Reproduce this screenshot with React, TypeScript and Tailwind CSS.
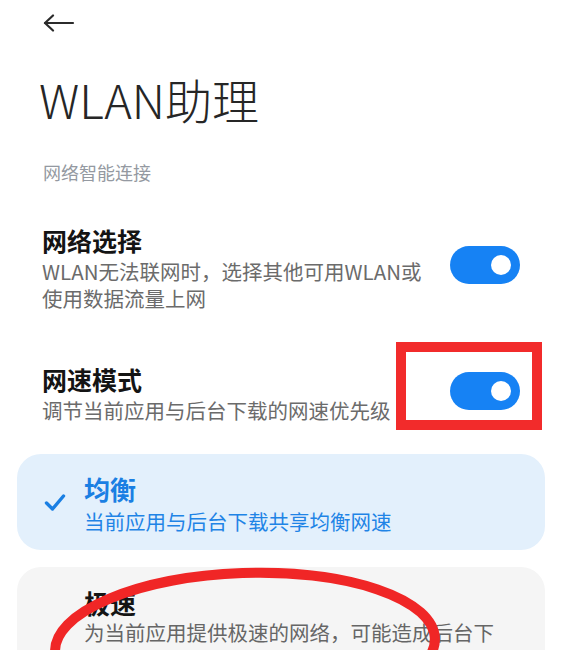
import React from "react";

function Toggle() {
  return (
    <div className="flex h-[38px] w-[70px] shrink-0 items-center justify-end rounded-full bg-[#1682f4] pr-[9px] mb-[6px]">
      <div className="h-[20px] w-[20px] rounded-full bg-white" />
    </div>
  );
}

export default function App() {
  return (
    <div className="relative h-[650px] w-[562px] overflow-hidden bg-white font-['Noto_Sans_CJK_SC','Noto_Sans',sans-serif]">
      {/* header */}
      <div className="flex h-[46px] items-center pl-[43px]">
        <svg width="32" height="18" viewBox="0 0 32 18" fill="none" stroke="#2b2b2b" strokeWidth="2.2" strokeLinecap="round" strokeLinejoin="round">
          <path d="M2 9 H30" />
          <path d="M10 1.5 L2 9 L10 16.5" />
        </svg>
      </div>

      {/* title */}
      <div className="mt-[30px] pl-[39px] text-[47px] font-extralight leading-[46px] text-[#262626]">
        WLAN助理
      </div>

      {/* section label */}
      <div className="mt-[38px] pl-[43px] text-[18px] leading-[24px] text-[#9499a1]">
        网络智能连接
      </div>

      {/* row 1 */}
      <div className="mt-[40px] flex items-center gap-[12px] pl-[42px] pr-[42px]">
        <div className="flex-1">
          <div className="text-[25px] font-bold leading-[32px] text-[#141414]">网络选择</div>
          <div className="mt-[2px] text-[20.5px] leading-[27px] text-[#6b6b6b]">
            WLAN无法联网时，选择其他可用WLAN或
            <br />
            使用数据流量上网
          </div>
        </div>
        <Toggle />
      </div>

      {/* row 2 */}
      <div className="mt-[51px] flex items-center gap-[12px] pl-[42px] pr-[42px]">
        <div className="flex-1">
          <div className="text-[25px] font-bold leading-[32px] text-[#141414]">网速模式</div>
          <div className="mt-[2px] whitespace-nowrap text-[20.5px] leading-[27px] text-[#6b6b6b]">
            调节当前应用与后台下载的网速优先级
          </div>
        </div>
        <Toggle />
      </div>

      {/* cards */}
      <div className="mt-[30px] px-[17px]">
        <div className="flex h-[96px] items-center gap-[18px] rounded-[24px] bg-[#e3f0fc] pl-[27px] pr-[30px]">
          <svg width="22" height="19" viewBox="0 0 22 19" fill="none" stroke="#1a7fe3" strokeWidth="3.4" strokeLinecap="round" strokeLinejoin="round">
            <path d="M2.5 10 L8.5 16 L19.5 3" />
          </svg>
          <div className="pt-[4px]">
            <div className="text-[26px] font-bold leading-[32px] text-[#1a7fe3]">均衡</div>
            <div className="mt-[3px] text-[20.5px] leading-[27px] text-[#1f84e6]">当前应用与后台下载共享均衡网速</div>
          </div>
        </div>

        <div className="mt-[17px] rounded-[24px] bg-[#f5f5f5] pb-[20px] pl-[67px] pr-[40px] pt-[20px]">
          <div className="text-[26px] font-bold leading-[32px] text-[#141414]">极速</div>
          <div className="text-[20.5px] leading-[27px] text-[#666666]">
            为当前应用提供极速的网络，可能造成后台下载速度变慢
          </div>
        </div>
      </div>

      {/* annotation overlays */}
      <div className="absolute left-[396px] top-[342px] h-[88px] w-[146px] border-[10px] border-[#f22b2b]" />
      <svg className="pointer-events-none absolute left-0 top-0" width="562" height="650" viewBox="0 0 562 650" fill="none">
        <ellipse cx="245" cy="645" rx="190" ry="72" stroke="#f02626" strokeWidth="10" transform="rotate(-2 245 645)" />
      </svg>
    </div>
  );
}
